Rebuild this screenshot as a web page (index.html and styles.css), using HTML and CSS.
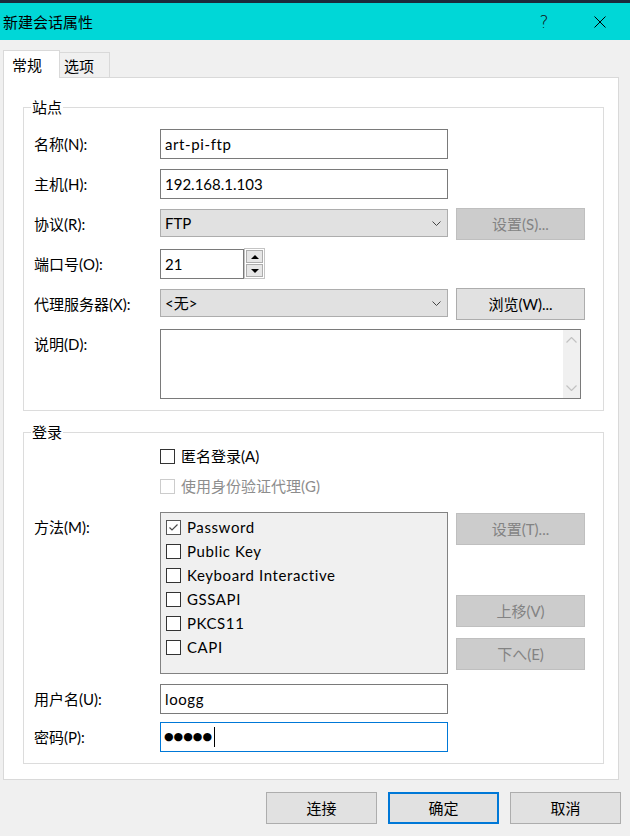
FILE: index.html
```html
<!DOCTYPE html>
<html lang="zh-CN">
<head>
<meta charset="utf-8">
<title>新建会话属性</title>
<link rel="stylesheet" href="styles.css">
</head>
<body>
<div class="titlebar">
  <span class="title">新建会话属性</span>
  <span class="cap help">?</span>
  <span class="cap close"><svg width="12" height="12" viewBox="0 0 12 12"><path d="M0.5 0.5 L11.5 11.5 M11.5 0.5 L0.5 11.5" stroke="#000" stroke-width="1" fill="none"/></svg></span>
</div>
<div class="client">
  <div class="tabs">
    <div class="tab active">常规</div>
    <div class="tab">选项</div>
  </div>
  <div class="panel">
    <fieldset class="group">
      <legend>站点</legend>
      <div class="group-body site">
        <div class="row">
          <div class="label">名称(N):</div>
          <div class="field"><span class="latin">art-pi-ftp</span></div>
        </div>
        <div class="row">
          <div class="label">主机(H):</div>
          <div class="field">192.168.1.103</div>
        </div>
        <div class="row">
          <div class="label">协议(R):</div>
          <div class="select"><span class="sel-text">FTP</span><svg class="chev" width="9" height="5" viewBox="0 0 9 5"><polyline points="0.5,0.5 4.5,4.5 8.5,0.5" fill="none" stroke="#444" stroke-width="1"/></svg></div>
          <div class="btn side disabled">设置(S)...</div>
        </div>
        <div class="row">
          <div class="label">端口号(O):</div>
          <div class="field port">21</div>
          <div class="spin">
            <div class="spin-btn"><span class="tri up"></span></div>
            <div class="spin-btn"><span class="tri down"></span></div>
          </div>
        </div>
        <div class="row">
          <div class="label">代理服务器(X):</div>
          <div class="select"><span class="sel-text">&lt;无&gt;</span><svg class="chev" width="9" height="5" viewBox="0 0 9 5"><polyline points="0.5,0.5 4.5,4.5 8.5,0.5" fill="none" stroke="#444" stroke-width="1"/></svg></div>
          <div class="btn side">浏览(W)...</div>
        </div>
        <div class="row tall">
          <div class="label">说明(D):</div>
          <div class="memo">
            <div class="memo-text"></div>
            <div class="vscroll">
              <svg width="11" height="6" viewBox="0 0 11 6"><polyline points="0.5,5.5 5.5,0.5 10.5,5.5" fill="none" stroke="#c2c2c2" stroke-width="1.2"/></svg>
              <svg width="11" height="6" viewBox="0 0 11 6"><polyline points="0.5,0.5 5.5,5.5 10.5,0.5" fill="none" stroke="#c2c2c2" stroke-width="1.2"/></svg>
            </div>
          </div>
        </div>
      </div>
    </fieldset>
    <fieldset class="group login">
      <legend>登录</legend>
      <div class="group-body lg">
        <div class="checkrow first">
          <span class="cb"></span><span>匿名登录(A)</span>
        </div>
        <div class="checkrow second disabled-text">
          <span class="cb dis"></span><span>使用身份验证代理(G)</span>
        </div>
        <div class="method">
          <div class="label">方法(M):</div>
          <div class="listbox">
            <div class="item"><span class="cb checked"><svg width="13" height="13" viewBox="0 0 13 13"><polyline points="2.5,6.5 5,9 10.5,3.5" fill="none" stroke="#4a4a4a" stroke-width="1.2"/></svg></span><span class="latin">Password</span></div>
            <div class="item"><span class="cb"></span><span class="latin">Public Key</span></div>
            <div class="item"><span class="cb"></span><span class="latin">Keyboard Interactive</span></div>
            <div class="item"><span class="cb"></span><span class="latin">GSSAPI</span></div>
            <div class="item"><span class="cb"></span><span class="latin">PKCS11</span></div>
            <div class="item"><span class="cb"></span><span class="latin">CAPI</span></div>
          </div>
          <div class="side-col">
            <div class="btn side disabled">设置(T)...</div>
            <div class="btn side disabled move-up">上移(V)</div>
            <div class="btn side disabled move-down">下へ(E)</div>
          </div>
        </div>
        <div class="row user">
          <div class="label">用户名(U):</div>
          <div class="field"><span class="latin">loogg</span></div>
        </div>
        <div class="row pass">
          <div class="label">密码(P):</div>
          <div class="field focused"><span class="dots">●●●●●</span><span class="caret"></span></div>
        </div>
      </div>
    </fieldset>
  </div>
  <div class="actions">
    <div class="btn foot">连接</div>
    <div class="btn foot default">确定</div>
    <div class="btn foot">取消</div>
  </div>
</div>
</body>
</html>
```

FILE: styles.css
```css
* { box-sizing: border-box; }

html, body {
  margin: 0;
  padding: 0;
}

body {
  width: 630px;
  height: 836px;
  overflow: hidden;
  background: #f0f0f0;
  color: #000;
  font-family: Lato, "Noto Sans CJK SC", sans-serif;
  font-size: 15px;
  line-height: 20px;
}

.latin { letter-spacing: 0.6px; }

/* title bar */
.titlebar {
  height: 40px;
  border-top: 3px solid #1b2a3c;
  background: #00d7d7;
  display: flex;
  align-items: center;
  padding-left: 3px;
}
.title { flex: 1; font-size: 15px; }
.cap {
  width: 46px;
  height: 37px;
  display: flex;
  align-items: center;
  justify-content: center;
}
.help {
  font-family: "DejaVu Sans", sans-serif;
  font-size: 17px;
  font-weight: 200;
  margin-right: 10px;
  color: #111;
}
.close { margin-right: 7px; }

/* client area */
.client {
  padding: 10px 9px 0 3px;
}

.tabs {
  display: flex;
  align-items: flex-end;
  height: 27px;
}
.tab {
  border: 1px solid #d9d9d9;
  border-bottom: none;
  background: #f0f0f0;
}
.tab.active {
  width: 57px;
  height: 28px;
  margin-bottom: -1px;
  padding: 4px 0 0 8px;
  background: #fff;
  position: relative;
  z-index: 1;
}
.tab:not(.active) {
  width: 50px;
  height: 25px;
  border-left: none;
  padding: 3px 0 0 4px;
}

.panel {
  width: 616px;
  background: #fff;
  border: 1px solid #d9d9d9;
  padding: 19px 14px 15px 19px;
}

.group {
  margin: 0;
  padding: 0;
  min-width: 0;
  border: 1px solid #dcdcdc;
}
.group legend {
  margin-left: 7px;
  padding: 0 1px;
  line-height: 20px;
}
.group.login { margin-top: 11px; }

.group-body.site { padding: 12px 0 11px 10px; }
.group-body.lg { padding: 4px 0 11px 10px; }

.row {
  display: flex;
  align-items: flex-start;
  height: 30px;
  margin-bottom: 10px;
}
.row.tall { height: 70px; margin-bottom: 0; }
.row.user { margin-top: 10px; margin-bottom: 8px; }
.row.pass { margin-bottom: 0; }

.label {
  width: 126px;
  flex: none;
  line-height: 30px;
}

.field {
  width: 288px;
  height: 30px;
  border: 1px solid #7a7a7a;
  background: #fff;
  padding-left: 4px;
  line-height: 28px;
  white-space: nowrap;
  display: flex;
  align-items: center;
}
.field.port { width: 84px; }
.field.focused { border-color: #0078d7; padding-left: 3px; }

.dots {
  font-family: "DejaVu Sans", sans-serif;
  font-size: 11px;
  letter-spacing: 0;
  line-height: 20px;
}
.caret {
  width: 1px;
  height: 20px;
  background: #000;
  margin-left: 2px;
}

.select {
  width: 288px;
  height: 28px;
  border: 1px solid #adadad;
  background: #e1e1e1;
  display: flex;
  align-items: center;
  padding: 0 6px 0 4px;
}
.sel-text { flex: 1; }
.chev { flex: none; }

.btn {
  border: 1px solid #adadad;
  background: #e1e1e1;
  display: flex;
  align-items: center;
  justify-content: center;
  white-space: nowrap;
}
.btn.disabled {
  background: #cccccc;
  border-color: #bfbfbf;
  color: #838383;
}
.btn.side {
  width: 129px;
  height: 32px;
  margin-left: 8px;
  margin-top: -1px;
}

.spin {
  width: 21px;
  height: 31px;
  margin-top: -1px;
  border: 1px solid #c4c4c4;
  padding: 1px;
  display: flex;
  flex-direction: column;
  gap: 1px;
}
.spin-btn {
  flex: 1;
  border: 1px solid #adadad;
  background: #e6e6e6;
  display: flex;
  align-items: center;
  justify-content: center;
}
.tri {
  width: 0;
  height: 0;
  border-left: 4px solid transparent;
  border-right: 4px solid transparent;
}
.tri.up { border-bottom: 4px solid #000; }
.tri.down { border-top: 4px solid #000; }

.memo {
  width: 421px;
  height: 70px;
  border: 1px solid #7a7a7a;
  background: #fff;
  display: flex;
}
.memo-text { flex: 1; }
.vscroll {
  width: 17px;
  background: #f0f0f0;
  display: flex;
  flex-direction: column;
  align-items: center;
  justify-content: space-between;
  padding: 7px 0 7px;
}

/* login */
.checkrow {
  height: 20px;
  margin-left: 126px;
  display: flex;
  align-items: center;
  gap: 6px;
}
.checkrow.first { margin-bottom: 10px; }
.checkrow.second { margin-bottom: 16px; }
.disabled-text { color: #8d8d8d; }

.cb {
  width: 15px;
  height: 15px;
  flex: none;
  border: 1px solid #333;
  background: #fff;
  display: flex;
  align-items: center;
  justify-content: center;
}
.cb.dis { border-color: #cccccc; }
.cb.checked { border-color: #555; }

.method {
  display: flex;
  align-items: flex-start;
}
.listbox {
  width: 288px;
  height: 162px;
  border: 1px solid #828282;
  background: #f0f0f0;
  padding: 2px 0 0 5px;
}
.item {
  height: 24px;
  display: flex;
  align-items: center;
  gap: 6px;
}
.side-col {
  display: flex;
  flex-direction: column;
}
.side-col .btn.side { margin-top: 1px; }
.side-col .btn.move-up { margin-top: 50px; }
.side-col .btn.move-down { margin-top: 11px; }

/* footer buttons */
.actions {
  display: flex;
  justify-content: flex-end;
  gap: 11px;
  margin-top: 12px;
}
.btn.foot {
  width: 111px;
  height: 32px;
}
.btn.foot.default {
  border: 2px solid #0078d7;
}
```
